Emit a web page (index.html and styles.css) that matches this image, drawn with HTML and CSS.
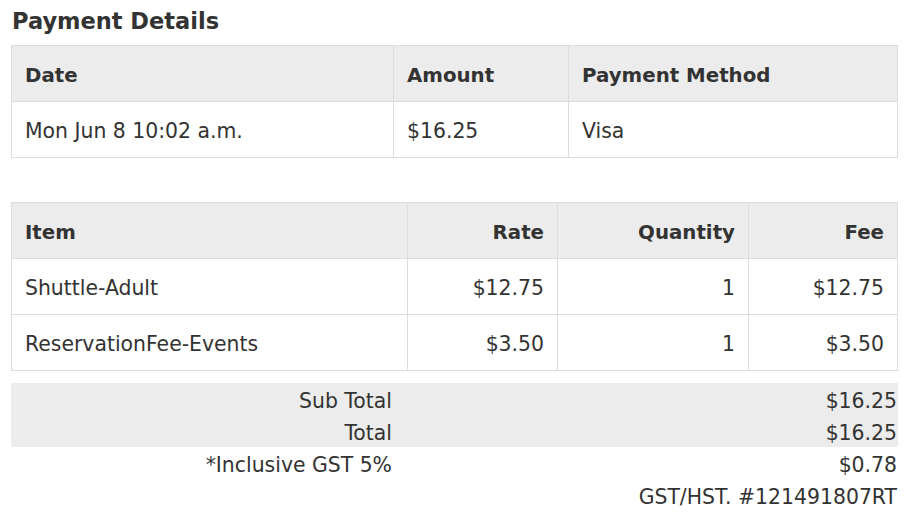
FILE: index.html
```html
<!doctype html>
<html lang="en">
<head>
  <meta charset="UTF-8" />
  <meta name="viewport" content="width=device-width, initial-scale=1.0" />
  <title>Payment Details</title>
  <link rel="stylesheet" href="styles.css">
</head>
<body>
  <div class="receipt">
    <h2>Payment Details</h2>

    <table class="grid payment-table">
      <thead>
        <tr>
          <th class="col-date">Date</th>
          <th class="col-amount">Amount</th>
          <th>Payment Method</th>
        </tr>
      </thead>
      <tbody>
        <tr>
          <td>Mon Jun 8 10:02 a.m.</td>
          <td>$16.25</td>
          <td>Visa</td>
        </tr>
      </tbody>
    </table>

    <table class="grid items-table">
      <thead>
        <tr>
          <th class="col-item">Item</th>
          <th class="col-rate num">Rate</th>
          <th class="col-qty num">Quantity</th>
          <th class="num">Fee</th>
        </tr>
      </thead>
      <tbody>
        <tr>
          <td>Shuttle-Adult</td>
          <td class="num">$12.75</td>
          <td class="num">1</td>
          <td class="num">$12.75</td>
        </tr>
        <tr>
          <td>ReservationFee-Events</td>
          <td class="num">$3.50</td>
          <td class="num">1</td>
          <td class="num">$3.50</td>
        </tr>
      </tbody>
    </table>

    <table class="totals">
      <tr class="shaded">
        <td class="label">Sub Total</td>
        <td>$16.25</td>
      </tr>
      <tr class="shaded">
        <td class="label">Total</td>
        <td>$16.25</td>
      </tr>
      <tr>
        <td class="label">*Inclusive GST 5%</td>
        <td>$0.78</td>
      </tr>
      <tr>
        <td class="label"></td>
        <td>GST/HST. #121491807RT</td>
      </tr>
    </table>
  </div>
</body>
</html>
```

FILE: styles.css
```css
* {
  box-sizing: border-box;
  margin: 0;
  padding: 0;
}

body {
  font-family: 'DejaVu Sans', Verdana, sans-serif;
  background: #fff;
  color: #333;
  font-size: 20.4px;
}

.receipt {
  width: 910px;
  padding: 6px 12px 0 11px;
}

h2 {
  font-size: 22.5px;
  font-weight: bold;
  line-height: 30px;
  margin-left: 1px;
  margin-bottom: 9px;
}

.grid {
  width: 887px;
  border-collapse: collapse;
  border: 1px solid #dcdcdc;
}

.grid th,
.grid td {
  height: 56px;
  padding: 3px 13px 0;
  border: 1px solid #dcdcdc;
  text-align: left;
  vertical-align: middle;
  white-space: nowrap;
}

.grid th {
  background: #ececec;
  font-weight: bold;
  font-size: 19.8px;
}

.grid .num {
  text-align: right;
}

.payment-table {
  margin-bottom: 44px;
}

.col-date { width: 382px; }
.col-amount { width: 175px; }

.col-item { width: 396px; }
.col-rate { width: 150px; }
.col-qty { width: 191px; }

.items-table {
  margin-bottom: 12px;
}

.totals {
  width: 887px;
  border-collapse: collapse;
}

.totals td {
  height: 32px;
  padding: 3px 1px 0 0;
  text-align: right;
  vertical-align: middle;
  white-space: nowrap;
}

.totals .label {
  width: 382px;
}

.totals .shaded td {
  background: #ececec;
}
```
